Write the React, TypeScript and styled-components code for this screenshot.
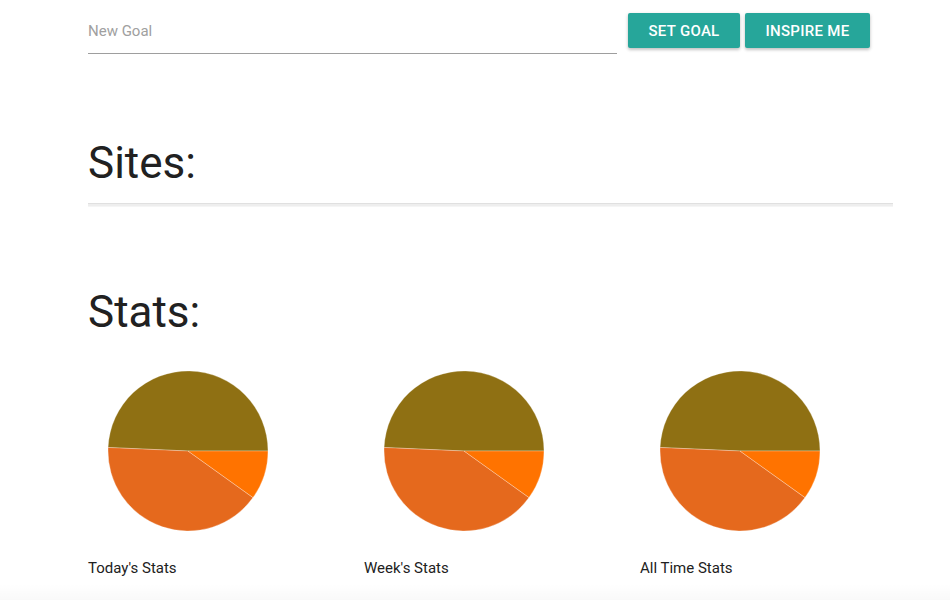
import React from "react";
import styled, { createGlobalStyle } from "styled-components";

const Global = createGlobalStyle`
  html, body { margin: 0; padding: 0; background: #fff; }
  body { font-family: Roboto, "Noto Sans", "Liberation Sans", sans-serif; color: rgba(0,0,0,0.87); }
`;

const Page = styled.div`
  width: 950px;
  height: 600px;
  overflow: hidden;
  display: flex;
  flex-direction: column;
`;

const Container = styled.div`
  margin-left: 88px;
  width: 805px;
  display: flex;
  flex-direction: column;
  flex: 1;
`;

const GoalRow = styled.div`
  display: flex;
  align-items: flex-start;
  padding-top: 13px;
`;

const GoalInput = styled.input`
  width: 529px;
  height: 36px;
  margin: 0 11px 0 0;
  padding: 0 0 4px;
  border: none;
  border-bottom: 1px solid #9e9e9e;
  outline: none;
  font-family: Roboto, "Liberation Sans", sans-serif;
  font-size: 15px;
  color: rgba(0,0,0,0.87);
  background: transparent;
  box-sizing: content-box;
  &::placeholder { color: #a0a0a0; }
`;

const Buttons = styled.div`
  display: flex;
  gap: 5px;
`;

const Button = styled.button<{ $w: number }>`
  width: ${(p) => p.$w}px;
  height: 35px;
  border: none;
  border-radius: 2px;
  background: #26a69a;
  color: #fff;
  font-family: Roboto, "Liberation Sans", sans-serif;
  font-size: 15px;
  font-weight: 500;
  letter-spacing: 0.3px;
  text-transform: uppercase;
  padding: 0;
  box-shadow: 0 2px 3px 0 rgba(0,0,0,0.16), 0 1px 4px 0 rgba(0,0,0,0.12);
  cursor: pointer;
`;

const Heading = styled.h3<{ $top: number }>`
  margin: ${(p) => p.$top}px 0 0;
  font-family: Roboto, "Liberation Sans", sans-serif;
  font-size: 44px;
  font-weight: 400;
  line-height: 50px;
  color: #212121;
`;

const Divider = styled.div`
  margin-top: 15px;
  height: 2px;
  border-top: 1px solid #e0e0e0;
  background: #eeeeee;
  border-bottom: 1px solid #f5f5f5;
`;

const ChartGrid = styled.div`
  display: grid;
  grid-template-columns: repeat(3, 276px);
  margin-top: 14px;
`;

const ChartCell = styled.div`
  display: flex;
  flex-direction: column;
`;

const ChartLabel = styled.div`
  font-family: Roboto, "Liberation Sans", sans-serif;
  font-size: 15px;
  line-height: 18px;
  color: #212121;
  margin-top: 8px;
`;

const BottomShade = styled.div`
  height: 16px;
  margin-top: auto;
  background: linear-gradient(to bottom, rgba(0,0,0,0), rgba(0,0,0,0.025));
`;

type Slice = { value: number; color: string };

const slices: Slice[] = [
  { value: 49.3, color: "#8f7013" },
  { value: 40.8, color: "#e5691d" },
  { value: 9.9, color: "#ff7300" },
];

function Pie({ data }: { data: Slice[] }) {
  const cx = 100, cy = 100, r = 80;
  const total = data.reduce((s, d) => s + d.value, 0);
  let start = 0;
  const pt = (deg: number) => {
    const a = (deg * Math.PI) / 180;
    return [cx + r * Math.cos(a), cy - r * Math.sin(a)];
  };
  return (
    <svg width="200" height="200" viewBox="0 0 200 200">
      {data.map((d, i) => {
        const sweep = (d.value / total) * 360;
        const [x1, y1] = pt(start);
        const [x2, y2] = pt(start + sweep);
        const large = sweep > 180 ? 1 : 0;
        start += sweep;
        return (
          <path
            key={i}
            d={`M${cx},${cy} L${x1},${y1} A${r},${r} 0 ${large} 0 ${x2},${y2} Z`}
            fill={d.color}
            stroke="rgba(255,255,255,0.35)"
            strokeWidth={0.8}
          />
        );
      })}
    </svg>
  );
}

const charts = ["Today's Stats", "Week's Stats", "All Time Stats"];

export default function App() {
  return (
    <Page>
      <Global />
      <Container>
        <GoalRow>
          <GoalInput placeholder="New Goal" />
          <Buttons>
            <Button $w={112}>Set Goal</Button>
            <Button $w={125}>Inspire Me</Button>
          </Buttons>
        </GoalRow>
        <Heading $top={84}>Sites:</Heading>
        <Divider />
        <Heading $top={80}>Stats:</Heading>
        <ChartGrid>
          {charts.map((c) => (
            <ChartCell key={c}>
              <Pie data={slices} />
              <ChartLabel>{c}</ChartLabel>
            </ChartCell>
          ))}
        </ChartGrid>
      </Container>
      <BottomShade />
    </Page>
  );
}
